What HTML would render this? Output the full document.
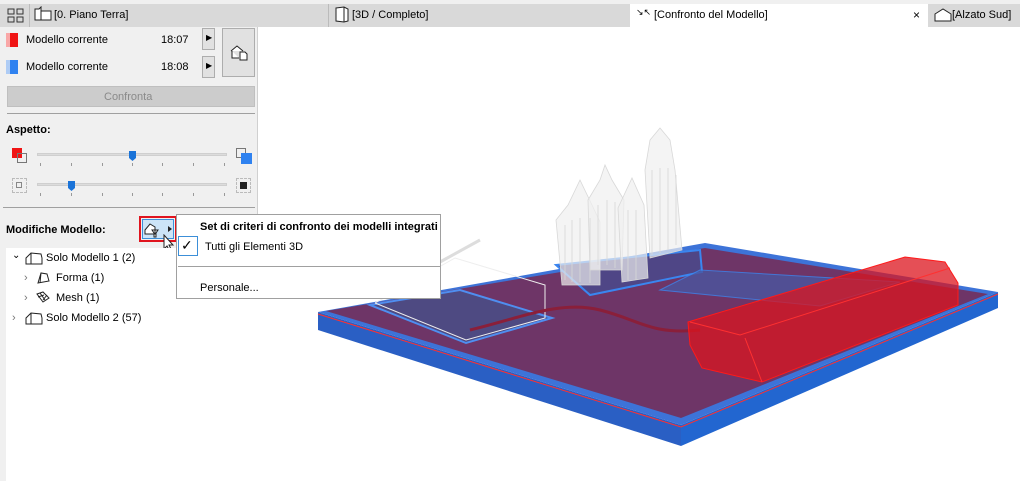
<!DOCTYPE html>
<html><head><meta charset="utf-8"><style>
*{margin:0;padding:0;box-sizing:border-box}
body{width:1020px;height:481px;overflow:hidden;background:#fff;font-family:"Liberation Sans",sans-serif;font-size:11px;color:#000;position:relative}
.abs{position:absolute}
.tabbar{left:0;top:0;width:1020px;height:27px;background:#d9d9d9;border-top:4px solid #f0f0f0}
.panel{left:0;top:27px;width:258px;height:454px;background:#f0f0f0;border-right:1px solid #d0d0d0}
.t{position:absolute;white-space:nowrap}
.btn{position:absolute;background:#e1e1e1;border:1px solid #adadad}
.line{position:absolute;height:1px;background:#a0a0a0}
.track{position:absolute;height:3px;background:#dcdcdc;border:1px solid #cfcfcf}
.tick{position:absolute;width:1px;height:3px;background:#999}
</style></head><body>
<div class="abs tabbar"></div>
<svg class="abs" style="left:7px;top:8px" width="18" height="16"><g fill="none" stroke="#333"><rect x="1" y="1" width="6" height="5"/><rect x="10" y="1" width="6" height="5"/><rect x="1" y="9" width="6" height="5"/><rect x="10" y="9" width="6" height="5"/></g></svg>
<div class="abs" style="left:29px;top:4px;width:1px;height:23px;background:#bbb"></div>
<svg class="abs" style="left:34px;top:6px" width="20" height="16"><path d="M1 3h4l2-2v13H1zM7 5h10v9H7" fill="#fff" stroke="#222"/></svg>
<div class="t" style="left:54px;top:9px">[0. Piano Terra]</div>
<div class="abs" style="left:328px;top:4px;width:1px;height:23px;background:#bbb"></div>
<svg class="abs" style="left:334px;top:6px" width="16" height="17"><path d="M2 2l8-1 4 2v12l-4 1-8-1z M10 1v15" fill="#fff" stroke="#222"/></svg>
<div class="t" style="left:352px;top:9px">[3D / Completo]</div>
<div class="abs" style="left:630px;top:4px;width:298px;height:23px;background:#fff"></div>
<div class="t" style="left:636px;top:7px;font-size:9px">↘↖</div>
<div class="t" style="left:654px;top:9px">[Confronto del Modello]</div>
<div class="t" style="left:913px;top:8px;font-size:12px">×</div>
<svg class="abs" style="left:934px;top:7px" width="18" height="16"><path d="M1 7l8-5 8 5v7H1z" fill="#fff" stroke="#222"/></svg>
<div class="t" style="left:952px;top:9px">[Alzato Sud]</div>

<div class="abs panel"></div>
<div class="abs" style="left:6px;top:33px;width:4px;height:14px;background:#f9a7a7"></div><div class="abs" style="left:10px;top:33px;width:8px;height:14px;background:#f01414"></div>
<div class="abs" style="left:6px;top:60px;width:4px;height:14px;background:#aeccf5"></div><div class="abs" style="left:10px;top:60px;width:8px;height:14px;background:#2f82f0"></div>
<div class="t" style="left:26px;top:34px">Modello corrente</div><div class="t" style="left:161px;top:34px">18:07</div>
<div class="t" style="left:26px;top:61px">Modello corrente</div><div class="t" style="left:161px;top:61px">18:08</div>
<div class="btn" style="left:202px;top:28px;width:13px;height:22px"></div><div class="t" style="left:206px;top:33px;font-size:8px">▶</div>
<div class="btn" style="left:202px;top:56px;width:13px;height:22px"></div><div class="t" style="left:206px;top:61px;font-size:8px">▶</div>
<div class="btn" style="left:222px;top:28px;width:33px;height:49px"></div>
<svg class="abs" style="left:229px;top:43px" width="22" height="18"><path d="M2 8l6-5 6 5M3 8v7h7M11 9h5l2 2v6h-7z" fill="#fff" stroke="#222"/></svg>
<div class="abs" style="left:7px;top:86px;width:248px;height:21px;background:#cccccc;border:1px solid #bfbfbf"></div>
<div class="t" style="left:104px;top:91px;color:#8a8a8a">Confronta</div>
<div class="line" style="left:7px;top:113px;width:248px"></div>
<div class="t" style="left:6px;top:124px;font-weight:bold">Aspetto:</div>
<div class="abs" style="left:12px;top:148px;width:10px;height:10px;background:#f01414"></div>
<div class="abs" style="left:17px;top:153px;width:10px;height:10px;border:1px solid #777"></div>
<div class="track" style="left:37px;top:153px;width:190px"></div>
<svg class="abs" style="left:128px;top:150px" width="9" height="12"><path d="M1 1h7v7l-3.5 3L1 8z" fill="#1a73d8"/></svg>
<div class="abs" style="left:236px;top:148px;width:10px;height:10px;border:1px solid #777"></div>
<div class="abs" style="left:241px;top:153px;width:11px;height:11px;background:#2f82f0"></div>
<div class="track" style="left:37px;top:183px;width:190px"></div>
<svg class="abs" style="left:67px;top:180px" width="9" height="12"><path d="M1 1h7v7l-3.5 3L1 8z" fill="#1a73d8"/></svg>
<div class="abs" style="left:12px;top:178px;width:15px;height:15px;border:1px dashed #bbb"></div>
<div class="abs" style="left:16px;top:182px;width:6px;height:6px;border:1px solid #888"></div>
<div class="abs" style="left:236px;top:178px;width:15px;height:15px;border:1px dashed #bbb"></div>
<div class="abs" style="left:240px;top:182px;width:7px;height:7px;background:#222"></div>
<div class="tick" style="left:40px;top:163px"></div><div class="tick" style="left:71px;top:163px"></div><div class="tick" style="left:102px;top:163px"></div><div class="tick" style="left:132px;top:163px"></div><div class="tick" style="left:162px;top:163px"></div><div class="tick" style="left:193px;top:163px"></div><div class="tick" style="left:224px;top:163px"></div>
<div class="tick" style="left:40px;top:193px"></div><div class="tick" style="left:71px;top:193px"></div><div class="tick" style="left:102px;top:193px"></div><div class="tick" style="left:132px;top:193px"></div><div class="tick" style="left:162px;top:193px"></div><div class="tick" style="left:193px;top:193px"></div><div class="tick" style="left:224px;top:193px"></div>
<div class="line" style="left:3px;top:207px;width:252px"></div>
<div class="t" style="left:6px;top:224px;font-weight:bold">Modifiche Modello:</div>
<div class="abs" style="left:139px;top:216px;width:38px;height:26px;border:2px solid #e0141e"></div>
<div class="abs" style="left:142px;top:219px;width:32px;height:20px;background:#cce4f7;border:1px solid #3c8fd8"></div>
<svg class="abs" style="left:143px;top:220px" width="30" height="18"><path d="M2 10l5-6 5 3v7H2zM9 10h6l-2 3v4h-2v-4z" fill="#fff" stroke="#222"/><path d="M25 6l4 3-4 3z" fill="#222"/></svg>
<svg class="abs" style="left:163px;top:234px" width="14" height="20"><path d="M1 1v14l3-3 3 6 2-1-3-6h4z" fill="#fff" stroke="#222"/></svg>
<div class="abs" style="left:6px;top:248px;width:252px;height:233px;background:#fff"></div>
<div class="t" style="left:12px;top:250px;font-size:10px">⌄</div>
<svg class="abs" style="left:25px;top:251px" width="18" height="14"><path d="M1 7l5-5 10 1 1 4v6H1z M6 2v11" fill="#fff" stroke="#222"/></svg>
<div class="t" style="left:46px;top:252px">Solo Modello 1 (2)</div>
<div class="t" style="left:24px;top:272px;color:#777">›</div>
<svg class="abs" style="left:36px;top:271px" width="14" height="14"><path d="M2 12l3-10 6 1 2 7zM5 2l-1 10" fill="#fff" stroke="#222"/></svg>
<div class="t" style="left:56px;top:272px">Forma (1)</div>
<div class="t" style="left:24px;top:292px;color:#777">›</div>
<svg class="abs" style="left:36px;top:291px" width="14" height="12"><path d="M1 3l6-2 6 6-6 4zM4 2l5 7M2 6l6-2M7 9l4-5" fill="#fff" stroke="#222"/></svg>
<div class="t" style="left:56px;top:292px">Mesh (1)</div>
<div class="t" style="left:12px;top:312px;color:#777">›</div>
<svg class="abs" style="left:25px;top:311px" width="18" height="14"><path d="M1 7l5-5 10 1 1 4v6H1z M6 2v11" fill="#fff" stroke="#222"/></svg>
<div class="t" style="left:46px;top:312px">Solo Modello 2 (57)</div>

<svg class="abs" style="left:259px;top:27px" width="761" height="454" viewBox="259 27 761 454">
<polygon points="318,312 681,425 681,446 318,330" fill="#2a5fc4"/>
<polygon points="681,425 998,292 998,308 681,446" fill="#2266d0"/>
<polygon points="318,312 705,243 998,292 681,425" fill="#3d73d8"/>
<polygon points="326,311 705,248 988,294 681,418" fill="#6e3567"/>
<polygon points="370,305 460,290 552,318 466,343" fill="#4e4a82" stroke="#4f8ef0" stroke-width="2"/>
<polyline points="375,303 455,258 545,285 545,318 466,340 375,303" fill="none" stroke="#eee" stroke-width="1"/>
<polyline points="440,262 480,240" fill="none" stroke="#ddd" stroke-width="3"/>
<polygon points="556,265 700,250 702,272 590,295" fill="#4f4686" stroke="#3a86f0" stroke-width="2"/>
<polygon points="660,290 700,270 900,282 820,306" fill="#4a56a0" stroke="#3a86f0" opacity=".8"/>
<g stroke="#d8d8d8" fill="rgba(240,240,240,.7)" stroke-width=".8">
<polygon points="556,220 568,205 580,180 592,205 600,222 600,285 562,285"/>
<polygon points="588,200 600,180 605,165 612,180 624,200 622,270 590,270"/>
<polygon points="618,208 632,178 644,205 648,278 622,282"/>
<polygon points="645,170 650,140 660,128 670,140 675,170 682,250 650,258"/>
<path d="M565 225v55M572 220v62M580 218v64M590 218v65M598 205v60M607 200v65M615 202v66M628 210v70M636 210v70M652 170v85M660 168v85M668 168v82M676 175v70" fill="none"/>
</g>
<path d="M470 330 C520 318 560 300 600 310 C640 320 650 335 700 330" fill="none" stroke="#8a1f3a" stroke-width="3"/>
<polygon points="688,322 905,257 945,262 958,283 958,305 762,382 702,368 690,345" fill="rgba(220,20,30,.75)" stroke="#ff1a1a"/>
<polyline points="690,322 740,335 950,268" fill="none" stroke="#ff3030"/>
<polyline points="745,338 762,382" fill="none" stroke="#ff3030"/>
<polyline points="318,314 681,427 998,294" fill="none" stroke="#ff3030" stroke-width="1"/>
</svg>

<div class="abs" style="left:176px;top:214px;width:265px;height:85px;background:#fff;border:1px solid #a0a0a0"></div>
<div class="t" style="left:200px;top:221px;font-weight:bold">Set di criteri di confronto dei modelli integrati</div>
<div class="abs" style="left:178px;top:236px;width:20px;height:20px;border:1px solid #3c8fd8"></div>
<div class="t" style="left:181px;top:237px;font-size:14px">✓</div>
<div class="t" style="left:205px;top:241px">Tutti gli Elementi 3D</div>
<div class="abs" style="left:178px;top:266px;width:262px;height:1px;background:#a0a0a0"></div>
<div class="t" style="left:200px;top:282px">Personale...</div>
</body></html>
